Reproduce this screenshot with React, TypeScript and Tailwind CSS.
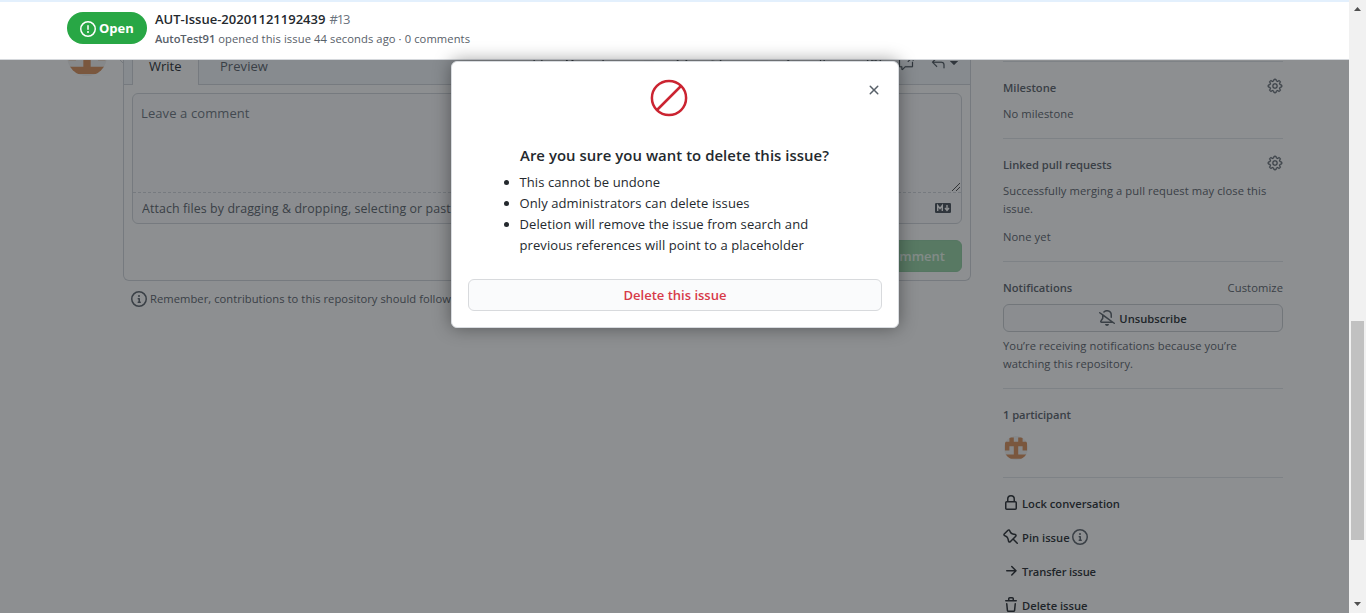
import React from "react";
import { GoGear, GoReply, GoCrossReference, GoHeading, GoBold, GoItalic, GoQuote, GoCode, GoLink, GoListUnordered, GoListOrdered, GoTasklist, GoMention } from "react-icons/go";

const PATHS = {
  issue: "M8 1.5a6.5 6.5 0 100 13 6.5 6.5 0 000-13zM0 8a8 8 0 1116 0A8 8 0 010 8zm9 3a1 1 0 11-2 0 1 1 0 012 0zm-.25-6.25a.75.75 0 00-1.5 0v3.5a.75.75 0 001.5 0v-3.5z",
  info: "M8 1.5a6.5 6.5 0 100 13 6.5 6.5 0 000-13zM0 8a8 8 0 1116 0A8 8 0 010 8zm6.5-.25A.75.75 0 017.25 7h1a.75.75 0 01.75.75v2.75h.25a.75.75 0 010 1.5h-2a.75.75 0 010-1.5h.25v-2h-.25a.75.75 0 01-.75-.75zM8 6a1 1 0 100-2 1 1 0 000 2z",
  x: "M3.72 3.72a.75.75 0 011.06 0L8 6.94l3.22-3.22a.75.75 0 111.06 1.06L9.06 8l3.22 3.22a.75.75 0 11-1.06 1.06L8 9.06l-3.22 3.22a.75.75 0 01-1.06-1.06L6.94 8 3.72 4.78a.75.75 0 010-1.06z",
  lock: "M4 4v2h-.25A1.75 1.75 0 002 7.75v5.5c0 .966.784 1.75 1.75 1.75h8.5A1.75 1.75 0 0014 13.25v-5.5A1.75 1.75 0 0012.25 6H12V4a4 4 0 10-8 0zm6.5 2V4a2.5 2.5 0 10-5 0v2h5zM12 7.5h.25a.25.25 0 01.25.25v5.5a.25.25 0 01-.25.25h-8.5a.25.25 0 01-.25-.25v-5.5a.25.25 0 01.25-.25H12z",
  pin: "M4.456.734a1.75 1.75 0 012.826.504l.613 1.327a3.081 3.081 0 002.084 1.707l2.454.584c1.332.317 1.8 1.972.832 2.94L11.06 10l3.72 3.72a.75.75 0 11-1.061 1.06L10 11.06l-2.204 2.205c-.968.968-2.623.5-2.94-.832l-.584-2.454a3.081 3.081 0 00-1.707-2.084l-1.327-.613a1.75 1.75 0 01-.504-2.826L4.456.734zM5.92 1.866a.25.25 0 00-.404-.072L1.794 5.516a.25.25 0 00.072.404l1.328.613A4.582 4.582 0 015.73 9.63l.584 2.454a.25.25 0 00.42.12l5.47-5.47a.25.25 0 00-.12-.42L9.63 5.73a4.581 4.581 0 01-3.098-2.537L5.92 1.866z",
  arrow: "M8.22 2.97a.75.75 0 011.06 0l4.25 4.25a.75.75 0 010 1.06l-4.25 4.25a.75.75 0 01-1.06-1.06l2.97-2.97H3.75a.75.75 0 010-1.5h7.44L8.22 4.03a.75.75 0 010-1.06z",
  trash: "M6.5 1.75a.25.25 0 01.25-.25h2.5a.25.25 0 01.25.25V3h-3V1.75zm4.5 0V3h2.25a.75.75 0 010 1.5H2.75a.75.75 0 010-1.5H5V1.75C5 .784 5.784 0 6.75 0h2.5C10.216 0 11 .784 11 1.75zM4.496 6.675a.75.75 0 10-1.492.15l.66 6.6A1.75 1.75 0 005.405 15h5.19c.9 0 1.652-.681 1.741-1.576l.66-6.6a.75.75 0 00-1.492-.149l-.66 6.6a.25.25 0 01-.249.225h-5.19a.25.25 0 01-.249-.225l-.66-6.6z",
  bell: "M8 1.5c-.997 0-1.895.416-2.534 1.086A.75.75 0 014.38 1.55 5 5 0 0113 5v2.373a.75.75 0 01-1.5 0V5A3.5 3.5 0 008 1.5zM4.182 4.31L1.19 2.143a.75.75 0 10-.88 1.214L3 5.305v2.642a.25.25 0 01-.042.139L1.255 10.64A1.518 1.518 0 002.518 13h11.108l1.184.857a.75.75 0 10.88-1.214l-1.375-.996a1.196 1.196 0 00-.013-.01L4.198 4.321a.733.733 0 00-.016-.011zm7.373 7.19L4.5 6.391v1.556c0 .346-.102.683-.294.97l-1.703 2.556a.018.018 0 00-.003.01.015.015 0 00.005.012.017.017 0 00.006.004l.007.001h9.037zM8 16a2 2 0 001.985-1.75c.017-.137-.097-.25-.235-.25h-3.5c-.138 0-.252.113-.235.25A2 2 0 008 16z",
};

function Icon({ name, className = "" }: { name: keyof typeof PATHS; className?: string }) {
  return (
    <svg viewBox="0 0 16 16" className={`size-4 shrink-0 ${className}`} fill="currentColor" fillRule="evenodd">
      <path d={PATHS[name]} />
    </svg>
  );
}

function Avatar({ className }: { className: string }) {
  return (
    <svg viewBox="0 0 24 24" className={className}>
      <clipPath id="round"><circle cx="12" cy="12" r="12" /></clipPath>
      <g clipPath="url(#round)">
        <rect width="24" height="24" fill="#f0f0f0" />
        <path fill="#d98f58" d="M5.4 1.5h4.4v4.3h4.4V1.5h4.4v4.3H23v8.8h-4.4v-4.4h-4.4V18.4H23v4.4H1V18.4h8.8v-8.2H5.4v4.4H1V5.8h4.4z" />
      </g>
    </svg>
  );
}

function Header() {
  return (
    <header className="relative z-20 flex h-[60px] shrink-0 border-b border-[#d5d8dc] bg-white pl-[67px] before:absolute before:inset-x-0 before:top-0 before:h-[2px] before:bg-[#e3f0fd]">
      <div className="mt-3 flex h-8 w-20 items-center rounded-full bg-[#28a745] pl-[13px] text-white">
        <Icon name="issue" className="mt-px" />
        <span className="ml-[3px] pt-px text-[13px] font-bold">Open</span>
      </div>
      <div className="ml-2 flex flex-col pt-[9px]">
        <div className="h-5 text-[13px] leading-5 whitespace-nowrap">
          <span className="font-semibold text-[#24292e]">AUT-Issue-20201121192439</span>
          <span className="ml-1 tracking-[-1.1px] text-[#6a737d]">#13</span>
        </div>
        <div className="h-5 text-[11.2px] leading-5 tracking-[0.09px] whitespace-nowrap text-[#586069]">
          <span className="font-semibold tracking-[-0.1px]">AutoTest91</span> opened this issue 44 seconds ago · 0 comments
        </div>
      </div>
    </header>
  );
}

function CommentForm() {
  return (
    <div className="relative ml-[19px] w-[848px] shrink-0">
      <svg className="absolute top-0 -left-[3px] size-1" viewBox="0 0 4 4" fill="none" stroke="#d1d5da"><path d="M0 0l3.5 3.5" /></svg>
      <div className="h-[221px] rounded-b-md border border-t-0 border-[#d1d5da]">
        <div className="flex h-[25px] border-b border-[#d1d5da] bg-[#f2f7fa]">
          <div className="-mb-px ml-2 h-[25px] w-[67px] border-x border-[#d1d5da] bg-white pl-4 text-[13px] leading-[13px] text-[#24292e]">Write</div>
          <div className="ml-[21px] text-[13px] leading-[13px] tracking-[0.05px] text-[#586069]">Preview</div>
          <div className="-mt-[5px] ml-auto flex h-4 gap-4 pr-3 text-[#444d56] [&_path]:stroke-current [&_path]:stroke-[0.3]">
            <GoHeading className="size-4" /><GoBold className="size-4" /><GoItalic className="size-4" />
            <GoQuote className="ml-4 size-4" /><GoCode className="size-4" /><GoLink className="size-4" />
            <GoListUnordered className="ml-4 size-4" /><GoListOrdered className="size-4" /><GoTasklist className="size-4" />
            <GoMention className="ml-4 size-4" /><GoCrossReference className="size-4" />
            <div className="flex items-center">
              <GoReply className="size-4" />
              <svg className="ml-1 h-1 w-2" viewBox="0 0 8 4"><path d="M0 0h8L4 4z" fill="currentColor" /></svg>
            </div>
          </div>
        </div>
        <div className="mx-2 mt-2 h-[131px] rounded-md border border-[#d1d5da] bg-[#fafbfc]">
          <div className="flex h-[99px] justify-between border-b border-dashed border-[#d1d5da] pl-2">
            <p className="pt-[9px] text-[13px] leading-5 tracking-[0.1px] text-[#6a737d]">Leave a comment</p>
            <svg className="mr-px mb-px size-2 self-end" viewBox="0 0 8 8" stroke="#333" strokeWidth=".9"><path d="M0 8L8 0M4 8l4-4" /></svg>
          </div>
          <div className="flex items-start justify-between pr-[10px] pl-[9px] text-[#586069]">
            <p className="w-[311px] overflow-hidden pt-[6px] text-[12.4px] leading-5 tracking-[0.1px] whitespace-nowrap">Attach files by dragging &amp; dropping, selecting or pasting them.</p>
            <svg className="mt-[10px] h-[10px] w-4" viewBox="0 0 16 10">
              <rect width="16" height="10" rx="1.2" fill="#444d56" />
              <path d="M2.7 8V2.5l2.3 3 2.3-3V8M12 2v5M10 5l2 2.5L14 5" fill="none" stroke="#fff" strokeWidth="1.4" />
            </svg>
          </div>
        </div>
        <div className="mt-4 mr-2 ml-auto flex h-8 w-[89px] items-center justify-end rounded-md border border-[#8fcca0] bg-[#94d3a2] pt-0.5 pr-4 text-[13px] font-semibold text-[#e9f6ec]">Comment</div>
      </div>
      <div className="mt-[9px] ml-2 flex items-center text-[11.2px] text-[#586069]">
        <Icon name="info" />
        <p className="ml-[3px] w-[302px] overflow-hidden leading-[18px] tracking-[0.05px] whitespace-nowrap">Remember, contributions to this repository should follow</p>
      </div>
    </div>
  );
}

function Sidebar() {
  return (
    <aside className="ml-8 w-[280px] shrink-0 pt-px text-[11.2px] leading-[18px] text-[#586069] [&_p]:tracking-[0.08px]">
      <section className="h-[78px] border-y border-[#e1e4e8] pt-[16px]">
        <div className="flex justify-between"><h3 className="pt-px font-semibold">Milestone</h3><GoGear className="size-4 stroke-current stroke-[0.3]" /></div>
        <p className="mt-2">No milestone</p>
      </section>
      <section className="h-[123px] border-b border-[#e1e4e8] pt-[16px]">
        <div className="flex justify-between"><h3 className="pt-px font-semibold tracking-[-0.03px]">Linked pull requests</h3><GoGear className="size-4 stroke-current stroke-[0.3]" /></div>
        <p className="mt-2">Successfully merging a pull request may close this<br />issue.</p>
        <p className="mt-[10px]">None yet</p>
      </section>
      <section className="h-[127px] border-b border-[#e1e4e8] pt-[17px]">
        <div className="flex justify-between"><h3 className="font-semibold">Notifications</h3><span className="tracking-[0.08px]">Customize</span></div>
        <div className="mt-[7px] flex h-7 items-center justify-center rounded-md border border-[#c8ccd1] bg-[#fafbfc]">
          <Icon name="bell" />
          <span className="ml-1 pt-px font-semibold text-[#24292e]">Unsubscribe</span>
        </div>
        <p className="mt-[5px]">You’re receiving notifications because you’re<br />watching this repository.</p>
      </section>
      <section className="h-[89px] border-b border-[#e1e4e8] pt-[17px]">
        <h3 className="font-semibold tracking-[-0.08px]">1 participant</h3>
        <Avatar className="mt-3 ml-px size-6" />
      </section>
      <div className="flex flex-col gap-[15px] pt-4 font-semibold text-[#24292e] [&_svg]:mt-px">
        <div className="flex h-[19px]"><Icon name="lock" /><span className="ml-[3px] pt-px">Lock conversation</span></div>
        <div className="flex h-[19px]"><Icon name="pin" /><span className="ml-[3px] pt-px">Pin issue</span><Icon name="info" className="ml-[2px] text-[#586069]" /></div>
        <div className="flex h-[19px]"><Icon name="arrow" /><span className="ml-[3px] pt-px tracking-[-0.15px]">Transfer issue</span></div>
        <div className="flex h-[19px]"><Icon name="trash" /><span className="ml-[3px] pt-px">Delete issue</span></div>
      </div>
    </aside>
  );
}

function DeleteDialog() {
  return (
    <div role="dialog" className="absolute top-[61px] left-[451px] z-30 h-[267px] w-[448px] rounded-md border border-[#d9dce0] bg-white px-4 text-[#24292e] shadow-[0_0_18px_rgba(0,0,0,0.4)]">
      <Icon name="x" className="absolute top-5 right-4 text-[#586069]" />
      <svg viewBox="0 0 40 40" className="mt-4 ml-[181px] size-10" fill="none" stroke="#cb2431" strokeWidth="2.5">
        <circle cx="20" cy="20" r="17.1" />
        <path d="M8 32L32 8" />
      </svg>
      <h4 className="mt-[25px] ml-[52px] text-[14.9px] leading-6 font-semibold tracking-[0.05px] whitespace-nowrap">Are you sure you want to delete this issue?</h4>
      <ul className="mt-[5px] ml-[51.5px] list-disc text-[13px] leading-[21px] tracking-[0.09px] whitespace-nowrap">
        <li>This cannot be undone</li>
        <li>Only administrators can delete issues</li>
        <li>Deletion will remove the issue from search and<br />previous references will point to a placeholder</li>
      </ul>
      <button className="mt-[23px] h-8 w-full rounded-md border border-[#d8dadd] bg-[#fafbfc] pt-px text-[13px] font-semibold text-[#d73a49]">Delete this issue</button>
    </div>
  );
}

export default function App() {
  return (
    <div className="flex h-[613px] w-[1366px] overflow-hidden bg-white font-['Open_Sans',sans-serif]">
      <div className="relative flex w-[1349px] flex-col overflow-hidden">
        <Header />
        <main className="flex min-h-0 flex-1 overflow-hidden pl-[67px]">
          <Avatar className="-mt-[24px] mr-[-3px] size-10 shrink-0" />
          <CommentForm />
          <Sidebar />
        </main>
        <div className="absolute inset-0 z-10 bg-[#1b1f23]/50" />
        <DeleteDialog />
      </div>
      <div className="flex w-[17px] flex-col items-center bg-[#f1f1f1]">
        <svg className="mt-[7px] h-1 w-[7px]" viewBox="0 0 7 4"><path d="M3.5 0L7 4H0z" fill="#505050" /></svg>
        <div className="mt-[310px] h-[219px] w-[13px] bg-[#c1c1c1]" />
        <svg className="mt-[62px] h-1 w-[7px]" viewBox="0 0 7 4"><path d="M0 0h7L3.5 4z" fill="#505050" /></svg>
      </div>
    </div>
  );
}
